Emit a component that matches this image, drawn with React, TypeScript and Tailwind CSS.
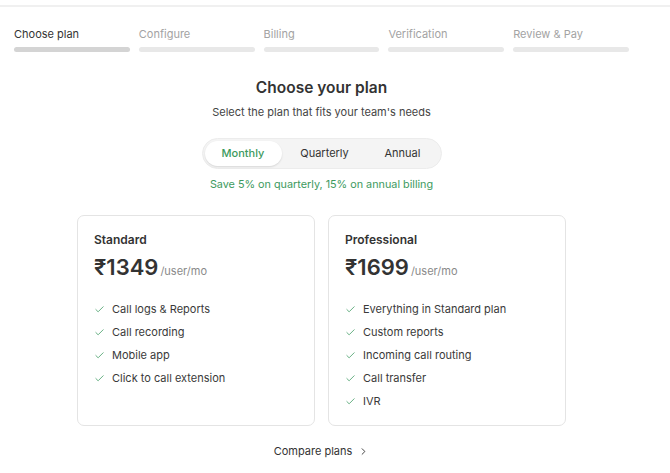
import { Check, ChevronRight } from "lucide-react";

const steps = ["Choose plan", "Configure", "Billing", "Verification", "Review & Pay"];

const plans = [
  {
    name: "Standard",
    price: "₹1349",
    features: ["Call logs & Reports", "Call recording", "Mobile app", "Click to call extension"],
  },
  {
    name: "Professional",
    price: "₹1699",
    features: ["Everything in Standard plan", "Custom reports", "Incoming call routing", "Call transfer", "IVR"],
  },
];

const App = () => {
  return (
    <div className="min-h-[473px] bg-white font-['Inter','Liberation_Sans',sans-serif] text-[#2f2f2f]">
      <div className="pt-[5px]">
        <div className="h-[2px] bg-[#f0f0f0]" />
      </div>
      <div className="w-[643px] px-[14px]">
        <div className="mt-[19px] grid grid-cols-5 gap-[9px]">
          {steps.map((s, i) => (
            <div key={s} className="flex flex-col">
              <span
                className={`text-[11px] leading-[16px] ${i === 0 ? "text-[#333]" : "text-[#a3a3a3]"}`}
              >
                {s}
              </span>
              <div
                className={`mt-[5px] h-[5px] rounded-full ${i === 0 ? "bg-[#d4d4d4]" : "bg-[#e8e8e8]"}`}
              />
            </div>
          ))}
        </div>

        <div className="flex flex-col items-center">
          <h1 className="mt-[25px] text-[15.5px] leading-[22px] font-semibold text-[#333]">Choose your plan</h1>
          <p className="mt-[3px] text-[11px] leading-[20px] text-[#444]">Select the plan that fits your team's needs</p>

          <div className="mt-[16px] flex h-[31px] w-[240px] items-center rounded-full border border-[#ececec] bg-[#f4f4f4] p-[2px]">
            <button className="h-full w-[77px] rounded-full bg-white text-[11px] font-medium text-[#3d9a5e] shadow-[0_1px_2px_rgba(0,0,0,0.12)]">
              Monthly
            </button>
            <button className="h-full w-[86px] text-[11px] text-[#333]">Quarterly</button>
            <button className="h-full w-[70px] text-[11px] text-[#333]">Annual</button>
          </div>

          <p className="mt-[8px] text-[10.8px] leading-[16px] text-[#3d9a5e]">
            Save 5% on quarterly, 15% on annual billing
          </p>

          <div className="mt-[22px] flex gap-[13px]">
            {plans.map((p) => (
              <div
                key={p.name}
                className="h-[211px] w-[238px] rounded-[7px] border border-[#e4e4e4] bg-white px-[16px] pt-[15px]"
              >
                <div className="text-[12px] leading-[18px] font-semibold text-[#333]">{p.name}</div>
                <div className="mt-[3px] flex items-baseline">
                  <span className="text-[22px] leading-[30px] font-semibold text-[#333]">{p.price}</span>
                  <span className="ml-[2px] text-[11px] text-[#8a8a8a]">/user/mo</span>
                </div>
                <ul className="mt-[16px] flex flex-col">
                  {p.features.map((f) => (
                    <li key={f} className="flex h-[23px] items-center gap-[7px] text-[11px] text-[#3a3a3a]">
                      <Check size={11} strokeWidth={2} className="text-[#5aa878]" />
                      {f}
                    </li>
                  ))}
                </ul>
              </div>
            ))}
          </div>

          <div className="mt-[17px] flex items-center gap-[6px] text-[11px] text-[#333]">
            Compare plans
            <ChevronRight size={11} strokeWidth={2} />
          </div>
        </div>
      </div>
    </div>
  );
};

export default App;
